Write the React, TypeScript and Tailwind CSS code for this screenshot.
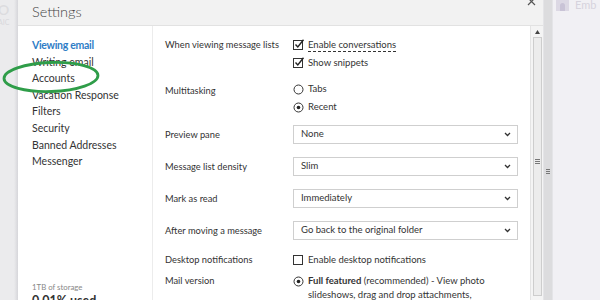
import React from "react";

const font = { fontFamily: 'Lato, "Open Sans", sans-serif' };

function CheckBox({ checked }: { checked: boolean }) {
  return (
    <svg width="12" height="12" viewBox="0 0 12 12" className="shrink-0">
      <rect x="0.5" y="1.5" width="9" height="9" fill="white" stroke="#333" strokeWidth="1" />
      {checked && <path d="M2.5 5.5 L4.8 8 L10.5 0.8" fill="none" stroke="#222" strokeWidth="1.4" />}
    </svg>
  );
}

function Radio({ checked }: { checked: boolean }) {
  return (
    <svg width="11" height="11" viewBox="0 0 11 11" className="shrink-0">
      <circle cx="5.5" cy="5.5" r="4.5" fill="white" stroke="#333" strokeWidth="1" />
      {checked && <circle cx="5.5" cy="5.5" r="1.8" fill="#222" />}
    </svg>
  );
}

function Select({ value }: { value: string }) {
  return (
    <div className="w-[225px] h-[19px] border border-[#cfcfcf] bg-white flex items-center justify-between pl-[7px] pr-[6px] text-[9.5px] text-[#333]">
      <span>{value}</span>
      <svg width="7" height="5" viewBox="0 0 7 5">
        <path d="M1 1 L3.5 3.5 L6 1" fill="none" stroke="#333" strokeWidth="1.3" />
      </svg>
    </div>
  );
}

function Label({ children }: { children: React.ReactNode }) {
  return <div className="w-[128px] shrink-0 text-[9.3px] text-[#333] whitespace-nowrap">{children}</div>;
}

export default function App() {
  const nav = ["Writing email", "Accounts", "Vacation Response", "Filters", "Security", "Banned Addresses", "Messenger"];
  return (
    <div className="w-[600px] h-[300px] overflow-hidden relative flex bg-[#f1f0f4]" style={font}>
      {/* left faded background */}
      <div className="w-[18px] shrink-0 bg-[#ebebed] relative flex flex-col overflow-hidden">
        <div className="text-[14px] text-[#dcdcdf] leading-[16px] -ml-[6px] mt-[2px] font-semibold">IO</div>
        <div className="text-[7px] text-[#d8d8dc] leading-[8px] -ml-[2px]">AIC</div>
        <div className="absolute right-0 top-0 bottom-0 w-[4px] bg-gradient-to-r from-[#ebebed] to-[#d6d6da]" />
      </div>

      {/* dialog */}
      <div className="w-[525px] shrink-0 flex flex-col">
        <div className="h-[26px] shrink-0 bg-[#f2f2f2] border-b border-[#e2e2e2] flex items-center pl-[14px] relative">
          <span className="text-[14.5px] text-[#444] leading-none -mt-[1px] font-light">Settings</span>
          <svg className="absolute left-[509px] -top-[3px]" width="9" height="9" viewBox="0 0 9 9">
            <path d="M1 1 L8 8 M8 1 L1 8" stroke="#555" strokeWidth="1.2" />
          </svg>
        </div>
        <div className="flex-1 flex bg-white min-h-0">
          {/* nav */}
          <div className="w-[135px] shrink-0 border-r border-[#ececec] pl-[14px] pt-[11px] flex flex-col text-[10.5px] text-[#333]">
            <div className="h-[16.6px] leading-[16.6px] font-bold text-[#2f7dc6] tracking-[-0.3px]">Viewing email</div>
            {nav.map((n) => (
              <div key={n} className="h-[16.6px] leading-[16.6px]">{n}</div>
            ))}
            <div className="mt-[111px] text-[7.8px] text-[#888] leading-[12px]">1TB of storage</div>
            <div className="text-[12.5px] text-[#333] leading-[15px] font-bold">0.01% used</div>
          </div>

          {/* main */}
          <div className="flex-1 pl-[12px] pt-[10px] flex flex-col">
            <div className="flex">
              <div className="h-[18px] flex items-center"><Label>When viewing message lists</Label></div>
              <div className="flex flex-col text-[9.5px] text-[#333]">
                <div className="h-[18px] flex items-center gap-[3px]">
                  <CheckBox checked />
                  <span className="border-b border-dashed border-[#333] leading-[12px]">Enable conversations</span>
                </div>
                <div className="h-[18px] flex items-center gap-[3px]">
                  <CheckBox checked />
                  <span>Show snippets</span>
                </div>
              </div>
            </div>

            <div className="flex mt-[8px]">
              <div className="h-[18px] flex items-center pt-[4px]"><Label>Multitasking</Label></div>
              <div className="flex flex-col text-[9.5px] text-[#333]">
                <div className="h-[18px] flex items-center gap-[4px]"><Radio checked={false} /><span>Tabs</span></div>
                <div className="h-[18px] flex items-center gap-[4px]"><Radio checked /><span>Recent</span></div>
              </div>
            </div>

            <div className="flex items-center mt-[9px]"><Label>Preview pane</Label><Select value="None" /></div>
            <div className="flex items-center mt-[13px]"><Label>Message list density</Label><Select value="Slim" /></div>
            <div className="flex items-center mt-[13px]"><Label>Mark as read</Label><Select value="Immediately" /></div>
            <div className="flex items-center mt-[13px]"><Label>After moving a message</Label><Select value="Go back to the original folder" /></div>

            <div className="flex items-center mt-[13px] h-[18px]">
              <Label>Desktop notifications</Label>
              <div className="flex items-center gap-[3px] text-[9.5px] text-[#333]">
                <CheckBox checked={false} />
                <span>Enable desktop notifications</span>
              </div>
            </div>

            <div className="flex mt-[7px]">
              <div className="h-[14px] flex items-center"><Label>Mail version</Label></div>
              <div className="flex gap-[4px] text-[9.5px] text-[#333] leading-[14px] w-[200px]">
                <div className="h-[14px] flex items-center"><Radio checked /></div>
                <div>
                  <span className="font-bold">Full featured</span> (recommended) - View photo slideshows, drag and drop attachments,
                </div>
              </div>
            </div>
          </div>

          {/* scrollbar */}
          <div className="w-[13px] shrink-0 bg-[#f4f4f4] border-l border-[#e4e4e4] flex flex-col items-center pt-[4px]">
            <svg width="5" height="4" viewBox="0 0 5 4"><path d="M0 4 L2.5 0 L5 4 Z" fill="#444" /></svg>
            <div className="mt-[3px] w-[9px] flex-1 mb-[4px] bg-[#ececec] border border-[#cdcdcd] flex flex-col items-center justify-center pb-[10px]">
              <div className="flex flex-col gap-[1px]">
                <div className="w-[5px] h-px bg-[#777]" />
                <div className="w-[5px] h-px bg-[#777]" />
                <div className="w-[5px] h-px bg-[#777]" />
              </div>
            </div>
          </div>
        </div>
      </div>

      {/* splitter */}
      <div className="w-[10px] shrink-0 bg-[#dcdcde] border-l border-[#c9c9cc] border-r border-[#e4e4e7] flex items-center justify-center pt-[42px]">
        <div className="flex flex-col gap-[1px]">
          <div className="w-[4px] h-px bg-[#777]" />
          <div className="w-[4px] h-px bg-[#777]" />
          <div className="w-[4px] h-px bg-[#777]" />
        </div>
      </div>

      {/* right faded area */}
      <div className="flex-1 bg-[#f1f0f4] flex items-start pl-[3px] gap-[6px]">
        <div className="w-[13px] h-[11px] bg-[#dcd8e4] flex items-end justify-center">
          <div className="w-[5px] h-[8px] bg-[#c9c3d6] rounded-t-[3px]" />
        </div>
        <span className="text-[11px] text-[#d6d3dd] leading-[11px] -mt-[1px]">Emb</span>
      </div>

      {/* annotation ellipse */}
      <svg className="absolute left-0 top-0 pointer-events-none" width="110" height="100" viewBox="0 0 110 100">
        <ellipse cx="51" cy="77" rx="47" ry="14.5" fill="none" stroke="#2f9d49" strokeWidth="2.8" transform="rotate(-2 51 77)" />
      </svg>
    </div>
  );
}
